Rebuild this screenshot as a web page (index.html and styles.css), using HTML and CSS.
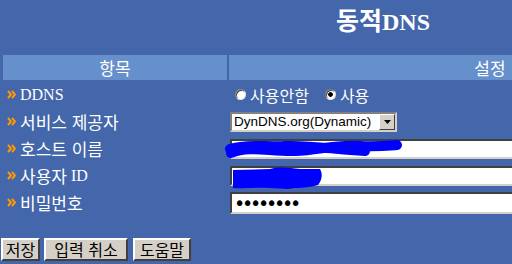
FILE: index.html
```html
<!DOCTYPE html>
<html lang="ko">
<head>
<meta charset="utf-8">
<title>동적DNS</title>
<link rel="stylesheet" href="styles.css">
</head>
<body>
<div class="page">
  <h1 class="title"><span class="ko">동적</span>DNS</h1>
  <div class="table">
    <div class="th">항목</div>
    <div class="th">설정</div>

    <div class="label"><svg class="bullet" viewBox="0 0 9 9" width="9" height="9"><polyline points="1,1 4,4.5 1,8" /><polyline points="5,1 8,4.5 5,8" /></svg>DDNS</div>
    <div class="value radios">
      <label class="radio"><input type="radio" name="ddns">사용안함</label>
      <label class="radio"><input type="radio" name="ddns" checked>사용</label>
    </div>

    <div class="label"><svg class="bullet" viewBox="0 0 9 9" width="9" height="9"><polyline points="1,1 4,4.5 1,8" /><polyline points="5,1 8,4.5 5,8" /></svg><span class="ko">서비스 제공자</span></div>
    <div class="value">
      <span class="select-wrap">
        <select class="select"><option>DynDNS.org(Dynamic)</option></select>
        <span class="select-arrow"><svg viewBox="0 0 7 4" width="7" height="4"><polygon points="0,0 7,0 3.5,4" /></svg></span>
      </span>
    </div>

    <div class="label"><svg class="bullet" viewBox="0 0 9 9" width="9" height="9"><polyline points="1,1 4,4.5 1,8" /><polyline points="5,1 8,4.5 5,8" /></svg><span class="ko">호스트 이름</span></div>
    <div class="value">
      <span class="field-wrap">
        <input class="field" type="text" value="">
        <svg class="redact" viewBox="0 0 180 24" width="180" height="24"><path d="M6,15 C25,7 45,14 70,13 C95,12 110,6 135,8 C150,9 160,8 172,7" /><path d="M5,11 C20,6 40,9 60,8 C90,7 110,12 140,13" /></svg>
      </span>
    </div>

    <div class="label"><svg class="bullet" viewBox="0 0 9 9" width="9" height="9"><polyline points="1,1 4,4.5 1,8" /><polyline points="5,1 8,4.5 5,8" /></svg><span class="ko">사용자</span>&nbsp;ID</div>
    <div class="value">
      <span class="field-wrap">
        <input class="field" type="text" value="">
        <svg class="redact-blob" viewBox="0 0 95 24" width="95" height="24"><path d="M3,4 L40,3 C50,0 60,2 70,3 L90,3 C93,8 92,14 88,19 C75,23 66,21 58,23 L40,22 C25,21 12,23 3,22 Z" /></svg>
      </span>
    </div>

    <div class="label"><svg class="bullet" viewBox="0 0 9 9" width="9" height="9"><polyline points="1,1 4,4.5 1,8" /><polyline points="5,1 8,4.5 5,8" /></svg><span class="ko">비밀번호</span></div>
    <div class="value">
      <input class="field password" type="password" value="12345678">
    </div>
  </div>

  <div class="buttons">
    <button class="btn btn-save" type="button">저장</button>
    <button class="btn btn-cancel" type="button">입력 취소</button>
    <button class="btn btn-help" type="button">도움말</button>
  </div>
</div>
</body>
</html>
```

FILE: styles.css
```css
html, body {
  margin: 0;
  padding: 0;
  overflow: hidden;
  background: #4466aa;
}

.page {
  width: 752px;
  padding: 0 1px;
  font-family: "Liberation Serif", "Noto Sans CJK KR", serif;
  color: #ffffff;
}

.ko {
  font-family: "Noto Sans CJK KR", sans-serif;
}

.title {
  box-sizing: border-box;
  height: 55px;
  margin: 0;
  padding: 5px 0 0 12px;
  text-align: center;
  font-size: 24px;
  font-weight: bold;
  line-height: 28px;
}

.title .ko {
  font-size: 25px;
}

.table {
  display: grid;
  grid-template-columns: 224px 522px;
  grid-auto-rows: 25px;
  column-gap: 2px;
  row-gap: 2px;
  padding-left: 2px;
}

.th {
  background: #6690cc;
  text-align: center;
  font-family: "Noto Sans CJK KR", sans-serif;
  font-size: 17px;
  line-height: 25px;
}

.label {
  display: flex;
  align-items: center;
  padding-left: 4px;
  font-size: 16px;
  white-space: nowrap;
}

.label .ko {
  font-size: 17px;
}

.bullet {
  margin-right: 4px;
  fill: none;
  stroke: #ff9a00;
  stroke-width: 2;
}

.value {
  display: flex;
  align-items: center;
  padding-left: 1px;
  font-size: 16px;
}

.radios {
  padding-left: 6px;
  gap: 16px;
}

.radio {
  display: flex;
  align-items: center;
  gap: 4px;
  font-family: "Noto Sans CJK KR", sans-serif;
  font-size: 16px;
}

.radio input {
  appearance: none;
  -webkit-appearance: none;
  box-sizing: border-box;
  width: 11px;
  height: 11px;
  margin: 0;
  border-radius: 50%;
  border: 1px solid #808080;
  border-right-color: #e8e8e8;
  border-bottom-color: #e8e8e8;
  background: #ffffff;
  box-shadow: inset 1px 1px 0 #404040;
}

.radio input:checked {
  background: radial-gradient(circle, #000000 0, #000000 2px, #ffffff 2.6px);
}

.select-wrap {
  position: relative;
  display: inline-block;
}

.select {
  appearance: none;
  -webkit-appearance: none;
  box-sizing: border-box;
  width: 167px;
  height: 20px;
  margin: 0;
  padding: 0 18px 0 2px;
  border: 2px solid;
  border-color: #808080 #d4d0c8 #d4d0c8 #808080;
  border-radius: 0;
  background: #ffffff;
  color: #000000;
  font-family: "Liberation Sans", sans-serif;
  font-size: 13.5px;
  line-height: 16px;
}

.select-arrow {
  position: absolute;
  top: 2px;
  right: 2px;
  box-sizing: border-box;
  width: 16px;
  height: 16px;
  display: flex;
  align-items: center;
  justify-content: center;
  background: #d4d0c8;
  border: 1px solid;
  border-color: #ffffff #404040 #404040 #ffffff;
  fill: #000000;
}

.field-wrap {
  position: relative;
  display: inline-block;
}

.field {
  box-sizing: border-box;
  width: 320px;
  height: 20px;
  margin: 0;
  padding: 0 3px;
  border: 2px solid;
  border-color: #404040 #d4d0c8 #d4d0c8 #404040;
  background: #ffffff;
  color: #000000;
  font-family: "Liberation Sans", sans-serif;
  font-size: 13px;
  outline: none;
}

.password {
  height: 22px;
  padding: 0 2px;
  font-family: "DejaVu Sans", sans-serif;
  font-size: 19px;
  letter-spacing: -3.2px;
}

.redact {
  position: absolute;
  left: -5px;
  top: -1px;
  fill: none;
  stroke: #0000ff;
  stroke-width: 10;
  stroke-linecap: round;
}

.redact-blob {
  position: absolute;
  left: 0;
  top: 0;
  fill: #0000ff;
}

.buttons {
  display: flex;
  gap: 4px;
  margin-top: 23px;
}

.btn {
  box-sizing: border-box;
  height: 23px;
  margin: 0;
  padding: 0;
  border: 2px solid;
  border-color: #ffffff #404040 #404040 #ffffff;
  background: #d4d0c8;
  color: #000000;
  font-family: "Noto Sans CJK KR", sans-serif;
  font-size: 16px;
  line-height: 17px;
}

.btn-save { width: 39px; }
.btn-cancel { width: 84px; }
.btn-help { width: 58px; margin-left: 1px; }
```
